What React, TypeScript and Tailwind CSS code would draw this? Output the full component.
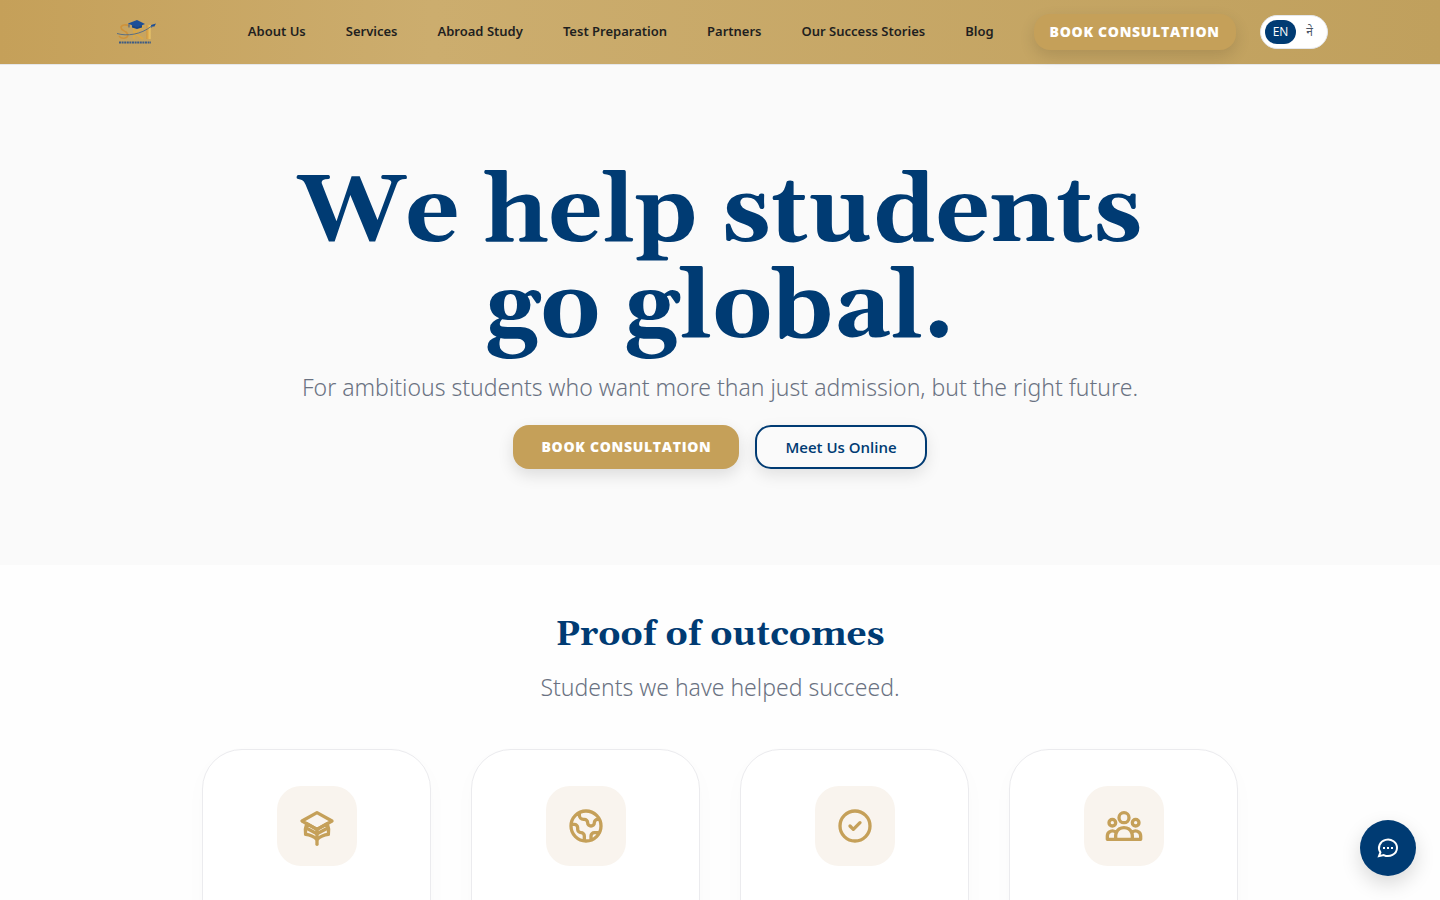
import React from "react";

interface NavLink {
  label: string;
  href: string;
}

interface OutcomeProp {
  label: string;
  paths: string[];
}

const navLinks: NavLink[] = [
  { label: "About Us", href: "#about" },
  { label: "Services", href: "#services" },
  { label: "Abroad Study", href: "#abroad-study" },
  { label: "Test Preparation", href: "#test-preparation" },
  { label: "Partners", href: "#partners" },
  { label: "Our Success Stories", href: "#stories" },
  { label: "Blog", href: "#blog" },
];

const outcomes: OutcomeProp[] = [
  {
    label: "cap",
    paths: [
      "M12 14l9-5-9-5-9 5 9 5z",
      "M12 14l6.16-3.422a12.083 12.083 0 01.665 6.479A11.952 11.952 0 0012 20.055a11.952 11.952 0 00-6.824-2.998 12.078 12.078 0 01.665-6.479L12 14z",
      "M5.5 13.2L12 16.6l6.5-3.4",
      "M12 14v9",
    ],
  },
  {
    label: "globe",
    paths: [
      "M3.055 11H5a2 2 0 012 2v1a2 2 0 002 2 2 2 0 012 2v2.945M8 3.935V5.5A2.5 2.5 0 0010.5 8h.5a2 2 0 012 2 2 2 0 104 0 2 2 0 012-2h1.064M15 20.488V18a2 2 0 012-2h3.064M21 12a9 9 0 11-18 0 9 9 0 0118 0z",
    ],
  },
  {
    label: "check",
    paths: ["M9 12l2 2 4-4m6 2a9 9 0 11-18 0 9 9 0 0118 0z"],
  },
  {
    label: "group",
    paths: [
      "M17 20h5v-2a3 3 0 00-5.356-1.857M17 20H7m10 0v-2c0-.656-.126-1.283-.356-1.857M7 20H2v-2a3 3 0 015.356-1.857M7 20v-2c0-.656.126-1.283.356-1.857m0 0a5.002 5.002 0 019.288 0M15 7a3 3 0 11-6 0 3 3 0 016 0zm6 3a2 2 0 11-4 0 2 2 0 014 0zM7 10a2 2 0 11-4 0 2 2 0 014 0z",
    ],
  },
];

const Logo = () => {
  return (
    <svg className="h-8 w-12" viewBox="0 0 48 32" fill="none" aria-hidden="true">
      <defs>
        <linearGradient id="gold" x1="0" y1="0" x2="1" y2="0">
          <stop offset="0" stopColor="#d0943a" />
          <stop offset="1" stopColor="#efcb6a" />
        </linearGradient>
      </defs>
      <path d="M17 10c-3-2-8-1-8 1.500s3 3 5 4.500 3 5-1 6-5-1-6-2" stroke="#cf923a" strokeWidth="1.600" />
      <path d="M22 11v12M31 10l-8 7 8 6" stroke="#dba845" strokeWidth="1.800" />
      <path d="M34.500 9h4v14h-4z" fill="url(#gold)" />
      <path d="M16 7.500l9-3.500 8 4-8 3.500z" fill="#1c4f98" />
      <path d="M20 9v2.500l5 1.500 5-1.500V9l-5 2z" fill="#174485" />
      <path d="M17 7.500v4" stroke="#1c4f98" strokeWidth="0.8" />
      <path d="M5 17.500c10 3 24 1 34-7" stroke="#3c5f8d" strokeWidth="0.8" />
      <path d="M39 9l5-1.500-2 3.500-1-1-1.500 2z" fill="#1c4f98" />
      <path d="M7 26.500h32" stroke="#3e5c84" strokeWidth="2" strokeDasharray="2 0.6" />
    </svg>
  );
};

const Header = () => {
  return (
    <header className="border-b border-gray-200 bg-linear-to-r from-[#c5a059] via-[#ccad6e] via-30% to-[#c0a05d]">
      <div className="mx-auto flex h-16 max-w-7xl items-center justify-between px-8">
        <a href="#home" aria-label="Home">
          <Logo />
        </a>
        <div className="flex items-center gap-6">
          <nav className="flex items-center gap-10 whitespace-nowrap">
            {navLinks.map((link) => (
              <a
                key={link.href}
                href={link.href}
                className="font-['Noto_Sans',sans-serif] text-[13px] font-semibold text-[#1f1f1f]"
              >
                {link.label}
              </a>
            ))}
            <a
              href="#book"
              className="rounded-2xl bg-[#c5a059] px-4 py-2 text-sm leading-5 font-extrabold tracking-wider text-white shadow-[0_6px_16px_rgba(0,0,0,0.12)]"
            >
              BOOK CONSULTATION
            </a>
          </nav>
          <div className="flex items-center rounded-full border border-gray-200 bg-white p-1 text-xs">
            <button className="h-6 rounded-full bg-[#003b73] px-2 font-medium text-white">EN</button>
            <button className="h-6 px-2.5 text-gray-600">ने</button>
          </div>
        </div>
      </div>
    </header>
  );
};

const Hero = () => {
  return (
    <section className="flex flex-col items-center bg-[#fafafa] px-8 pt-25 pb-24 text-center">
      <h1 className="font-['Gelasio','Liberation_Serif',serif] text-[95px] leading-24 font-bold text-[#003b73]">
        We help students
        <br />
        go global.
      </h1>
      <p className="mt-3 font-['Noto_Sans',sans-serif] text-[23px] leading-9 font-light text-gray-500">
        For ambitious students who want more than just admission, but the right future.
      </p>
      <div className="mt-5 flex gap-4">
        <a
          href="#book"
          className="flex h-11 items-center rounded-2xl bg-[#c5a059] px-7 text-sm font-extrabold tracking-wider text-white shadow-[0_6px_16px_rgba(0,0,0,0.12)]"
        >
          BOOK CONSULTATION
        </a>
        <a
          href="#online"
          className="flex h-11 items-center rounded-2xl border-2 border-[#003b73] bg-[#fafafa] px-7 text-[15px] font-semibold text-[#003b73] shadow-[0_6px_16px_rgba(0,0,0,0.10)]"
        >
          Meet Us Online
        </a>
      </div>
    </section>
  );
};

const OutcomeCard = ({ paths }: OutcomeProp) => {
  return (
    <div className="flex min-h-72 justify-center rounded-[40px] border border-[#ebebee] bg-white pt-9 shadow-[0_8px_24px_rgba(0,0,0,0.02)]">
      <div className="flex size-20 items-center justify-center rounded-3xl bg-[#f9f4ee]">
        <svg
          className="size-10 text-[#c5a059]"
          viewBox="0 0 24 24"
          fill="none"
          stroke="currentColor"
          strokeWidth="2"
          strokeLinecap="round"
          strokeLinejoin="round"
          aria-hidden="true"
        >
          {paths.map((d) => (
            <path key={d} d={d} />
          ))}
        </svg>
      </div>
    </div>
  );
};

const Outcomes = () => {
  return (
    <section className="bg-[#fefefe] pt-12.5 pb-24">
      <div className="mx-auto max-w-[1100px] px-8">
        <h2 className="text-center font-['Gelasio','Liberation_Serif',serif] text-[35px] leading-10 font-bold text-[#003b73]">
          Proof of outcomes
        </h2>
        <p className="mt-3.5 text-center font-['Noto_Sans',sans-serif] text-[23px] leading-9 font-light text-gray-500">
          Students we have helped succeed.
        </p>
        <div className="mt-11 grid grid-cols-4 gap-10">
          {outcomes.map((item) => (
            <OutcomeCard key={item.label} {...item} />
          ))}
        </div>
      </div>
    </section>
  );
};

const ChatButton = () => {
  return (
    <button
      aria-label="Chat"
      className="fixed right-6 bottom-6 flex size-14 items-center justify-center rounded-full bg-[#003b73] text-white shadow-[0_8px_20px_rgba(0,0,0,0.15)]"
    >
      <svg
        className="size-6"
        viewBox="0 0 24 24"
        fill="none"
        stroke="currentColor"
        strokeWidth="2"
        aria-hidden="true"
      >
        <path d="M7 12h2M11 12h2M15 12h2" />
        <path d="M21 12a9 8.300 0 01-13.255 7.051L3 20.200l1.395-3.920A9 8.300 0 1121 12z" />
      </svg>
    </button>
  );
};

const App = () => {
  return (
    <div className="min-h-screen bg-[#fefefe] font-['Open_Sans','Noto_Sans',sans-serif]">
      <Header />
      <main>
        <Hero />
        <Outcomes />
      </main>
      <ChatButton />
    </div>
  );
};

export default App;
